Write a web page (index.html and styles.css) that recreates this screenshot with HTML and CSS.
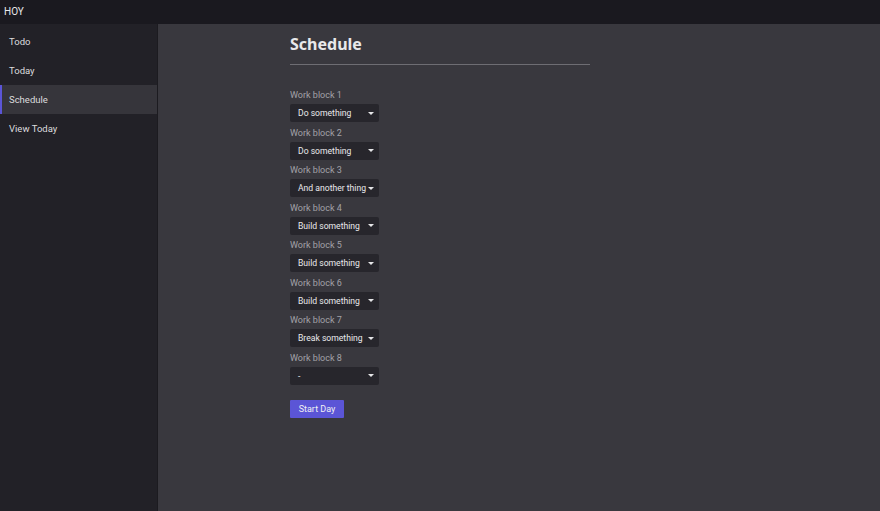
FILE: index.html
```html
<!DOCTYPE html>
<html>
<head>
<meta charset="utf-8">
<link rel="stylesheet" href="styles.css">
</head>
<body>
<header class="topbar">HOY</header>
<div class="layout">
  <nav class="sidebar">
    <a class="nav-item">Todo</a>
    <a class="nav-item">Today</a>
    <a class="nav-item active">Schedule</a>
    <a class="nav-item">View Today</a>
  </nav>
  <main class="main">
    <div class="content">
      <h1 class="title">Schedule</h1>
      <div class="rule"></div>
      <div class="blocks">
        <div class="block"><div class="label">Work block 1</div><div class="select"><span>Do something</span><span class="caret"></span></div></div>
        <div class="block"><div class="label">Work block 2</div><div class="select"><span>Do something</span><span class="caret"></span></div></div>
        <div class="block"><div class="label">Work block 3</div><div class="select"><span>And another thing</span><span class="caret"></span></div></div>
        <div class="block"><div class="label">Work block 4</div><div class="select"><span>Build something</span><span class="caret"></span></div></div>
        <div class="block"><div class="label">Work block 5</div><div class="select"><span>Build something</span><span class="caret"></span></div></div>
        <div class="block"><div class="label">Work block 6</div><div class="select"><span>Build something</span><span class="caret"></span></div></div>
        <div class="block"><div class="label">Work block 7</div><div class="select"><span>Break something</span><span class="caret"></span></div></div>
        <div class="block"><div class="label">Work block 8</div><div class="select"><span>-</span><span class="caret"></span></div></div>
      </div>
      <button class="btn">Start Day</button>
    </div>
  </main>
</div>
</body>
</html>
```
FILE: styles.css
```css
* { box-sizing: border-box; }
html, body { margin: 0; height: 100%; }
body {
  font-family: Roboto, "Noto Sans", sans-serif;
  font-size: 9px;
  color: #e6e6e8;
  background: #39383e;
  display: flex;
  flex-direction: column;
}
.topbar {
  height: 24px;
  background: #1a191f;
  color: #e8e8ea;
  font-size: 10px;
  line-height: 24px;
  padding-left: 4px;
}
.layout { flex: 1; display: flex; }
.sidebar {
  width: 158px;
  background: #222127;
  border-right: 1px solid #1c1b20;
  padding-top: 3px;
  display: flex;
  flex-direction: column;
}
.nav-item {
  height: 29px;
  line-height: 29px;
  color: #dcdcde;
  border-left: 2px solid transparent;
  padding-left: 7px;
  font-size: 9.5px;
}
.nav-item.active {
  background: #36353b;
  border-left-color: #5b55d6;
}
.main { flex: 1; }
.content {
  width: 300px;
  margin-left: 132px;
  padding-top: 10px;
}
.title {
  margin: 0;
  font-family: "Noto Sans", sans-serif;
  font-size: 16px;
  font-weight: 700;
  color: #e8e8ea;
  line-height: 20px;
}
.rule {
  height: 1px;
  background: #6e6d73;
  margin-top: 10px;
  margin-bottom: 25px;
}
.blocks { display: flex; flex-direction: column; gap: 5.5px; }
.block { display: flex; flex-direction: column; gap: 3px; }
.label { color: #a3a2a8; line-height: 11px; height: 11px; }
.select {
  width: 89px;
  height: 18px;
  background: #27262c;
  border-radius: 2px;
  display: flex;
  align-items: center;
  justify-content: space-between;
  padding: 0 5px 0 8px;
  color: #eaeaec;
  font-size: 8.6px;
  white-space: nowrap;
}
.caret {
  width: 0; height: 0;
  border-left: 3px solid transparent;
  border-right: 3px solid transparent;
  border-top: 3px solid #e6e6e8;
  flex: none;
  margin-left: 2px;
}
.btn {
  margin-top: 15px;
  width: 54px;
  height: 18px;
  border: 0;
  border-radius: 1px;
  background: #5b55d6;
  color: #f0f0f4;
  font-family: inherit;
  font-size: 9px;
  padding: 0;
}
```
